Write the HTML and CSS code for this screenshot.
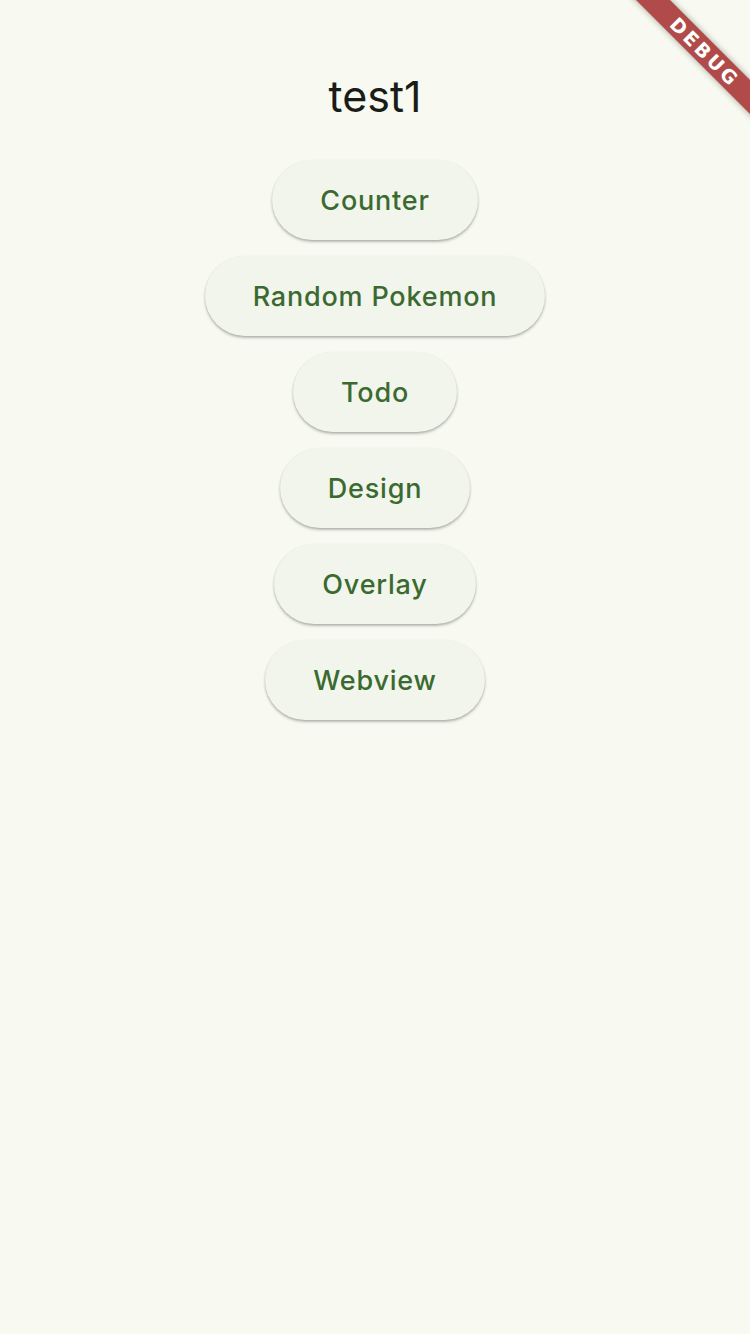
FILE: index.html
```html
<!DOCTYPE html>
<html>
<head>
<meta charset="utf-8">
<link rel="stylesheet" href="styles.css">
</head>
<body>
<div class="app">
  <header class="appbar"><h1 class="title">test1</h1></header>
  <main class="menu">
    <button class="btn">Counter</button>
    <button class="btn">Random Pokemon</button>
    <button class="btn">Todo</button>
    <button class="btn">Design</button>
    <button class="btn">Overlay</button>
    <button class="btn">Webview</button>
  </main>
  <div class="banner"><span>DEBUG</span></div>
</div>
</body>
</html>
```
FILE: styles.css
```css
html, body {
  margin: 0;
  padding: 0;
  background: #f8faf1;
}
.app {
  position: relative;
  width: 750px;
  height: 1334px;
  overflow: hidden;
  font-family: Inter, Roboto, "Noto Sans", sans-serif;
}
.appbar {
  height: 160px;
  box-sizing: border-box;
  padding-top: 40px;
  display: flex;
  justify-content: center;
}
.title {
  margin: 0;
  height: 112px;
  line-height: 112px;
  font-size: 43px;
  font-weight: 400;
  color: #1a1c18;
}
.menu {
  display: flex;
  flex-direction: column;
  align-items: center;
  gap: 16px;
}
.btn {
  height: 80px;
  padding: 0 48px;
  border: none;
  border-radius: 40px;
  background: #f2f5ec;
  color: #3a6a30;
  font-family: Inter, Roboto, "Noto Sans", sans-serif;
  font-size: 27px;
  font-weight: 450;
  letter-spacing: 0.8px;
  box-shadow: 0 2px 3px rgba(0,0,0,0.22), 0 1px 2px rgba(0,0,0,0.12);
}
.banner {
  position: absolute;
  top: 40px;
  right: -55px;
  width: 200px;
  height: 24px;
  background: #b04b49;
  transform: rotate(45deg);
  display: flex;
  justify-content: center;
  align-items: center;
  box-shadow: 0 0 6px rgba(0,0,0,0.35);
}
.banner span {
  color: #fff;
  font-family: "DejaVu Sans", sans-serif;
  font-weight: 900;
  font-size: 19px;
  letter-spacing: 3px;
}
```
